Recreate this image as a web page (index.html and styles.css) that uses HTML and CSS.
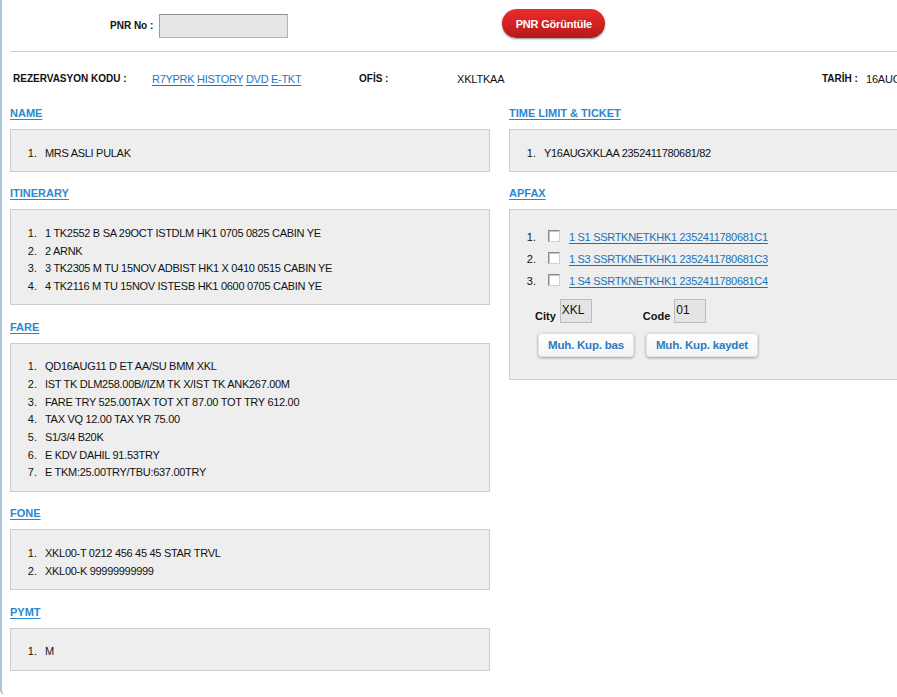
FILE: index.html
```html
<!DOCTYPE html>
<html lang="tr">
<head>
<meta charset="utf-8">
<title>PNR Görüntüle</title>
<link rel="stylesheet" href="styles.css">
</head>
<body>
<div class="page">
  <div class="search">
    <label class="search-label" for="pnr">PNR No :</label>
    <input class="pnr-input" id="pnr" type="text">
    <button class="btn-red" type="button">PNR Görüntüle</button>
  </div>
  <hr class="rule">
  <div class="info">
    <b class="info-label">REZERVASYON KODU :</b>
    <span class="info-links"><a href="#">R7YPRK</a> <a href="#">HISTORY</a> <a href="#">DVD</a> <a href="#">E-TKT</a></span>
    <b class="info-label">OFİS :</b>
    <span class="info-value">XKLTKAA</span>
    <b class="info-label">TARİH :</b>
    <span class="info-value">16AUG11</span>
  </div>
  <div class="columns">
    <div class="col">
      <section class="sec">
        <h2 class="sec-title"><a href="#">NAME</a></h2>
        <div class="box">
          <ol class="items">
            <li>MRS ASLI PULAK</li>
          </ol>
        </div>
      </section>
      <section class="sec">
        <h2 class="sec-title"><a href="#">ITINERARY</a></h2>
        <div class="box">
          <ol class="items">
            <li>1 TK2552 B SA 29OCT ISTDLM HK1 0705 0825 CABIN YE</li>
            <li>2 ARNK</li>
            <li>3 TK2305 M TU 15NOV ADBIST HK1 X 0410 0515 CABIN YE</li>
            <li>4 TK2116 M TU 15NOV ISTESB HK1 0600 0705 CABIN YE</li>
          </ol>
        </div>
      </section>
      <section class="sec">
        <h2 class="sec-title"><a href="#">FARE</a></h2>
        <div class="box">
          <ol class="items">
            <li>QD16AUG11 D ET AA/SU BMM XKL</li>
            <li>IST TK DLM258.00B//IZM TK X/IST TK ANK267.00M</li>
            <li>FARE TRY 525.00TAX TOT XT 87.00 TOT TRY 612.00</li>
            <li>TAX VQ 12.00 TAX YR 75.00</li>
            <li>S1/3/4 B20K</li>
            <li>E KDV DAHIL 91.53TRY</li>
            <li>E TKM:25.00TRY/TBU:637.00TRY</li>
          </ol>
        </div>
      </section>
      <section class="sec">
        <h2 class="sec-title"><a href="#">FONE</a></h2>
        <div class="box">
          <ol class="items">
            <li>XKL00-T 0212 456 45 45 STAR TRVL</li>
            <li>XKL00-K 99999999999</li>
          </ol>
        </div>
      </section>
      <section class="sec">
        <h2 class="sec-title"><a href="#">PYMT</a></h2>
        <div class="box">
          <ol class="items">
            <li>M</li>
          </ol>
        </div>
      </section>
    </div>
    <div class="col">
      <section class="sec">
        <h2 class="sec-title"><a href="#">TIME LIMIT &amp; TICKET</a></h2>
        <div class="box">
          <ol class="items">
            <li>Y16AUGXKLAA 2352411780681/82</li>
          </ol>
        </div>
      </section>
      <section class="sec">
        <h2 class="sec-title"><a href="#">APFAX</a></h2>
        <div class="box box-apfax">
          <ol class="items apfax-items">
            <li><input class="chk" type="checkbox"><a href="#">1 S1 SSRTKNETKHK1 2352411780681C1</a></li>
            <li><input class="chk" type="checkbox"><a href="#">1 S3 SSRTKNETKHK1 2352411780681C3</a></li>
            <li><input class="chk" type="checkbox"><a href="#">1 S4 SSRTKNETKHK1 2352411780681C4</a></li>
          </ol>
          <div class="fields">
            <label class="field-label">City</label>
            <input class="field-input" type="text" value="XKL" readonly>
            <label class="field-label field-label-code">Code</label>
            <input class="field-input" type="text" value="01" readonly>
          </div>
          <div class="actions">
            <button class="btn-white" type="button">Muh. Kup. bas</button>
            <button class="btn-white" type="button">Muh. Kup. kaydet</button>
          </div>
        </div>
      </section>
    </div>
  </div>
</div>
</body>
</html>
```

FILE: styles.css
```css
html, body {
  margin: 0;
  padding: 0;
  overflow: hidden;
  background: #ffffff;
}

body {
  font-family: "Liberation Sans", Arial, sans-serif;
  color: #111111;
}

.page {
  width: 1000px;
  height: 695px;
  box-sizing: border-box;
  padding-left: 8px;
  border-left: 2px solid #a9c7d9;
  border-bottom-left-radius: 5px;
}

/* search row */
.search {
  display: flex;
  align-items: flex-start;
  height: 29px;
  padding: 9px 0 0 100px;
}

.search-label {
  margin-top: 11px;
  margin-right: 6px;
  font-size: 10px;
  font-weight: bold;
  line-height: 12px;
  color: #111111;
}

.pnr-input {
  width: 129px;
  height: 24px;
  margin: 5px 0 0;
  padding: 0 3px;
  box-sizing: border-box;
  border: 1px solid #b4b4b4;
  border-top-color: #8e8e8e;
  border-left-color: #9c9c9c;
  background: #e6e5e5;
  font: 12px "Liberation Sans", Arial, sans-serif;
}

.btn-red {
  width: 103px;
  height: 29px;
  margin-left: 214px;
  padding: 0;
  border: 0;
  border-radius: 15px;
  background: linear-gradient(#ea2d2b 0%, #d42222 50%, #b01b1c 100%);
  box-shadow: 0 1px 2px rgba(0, 0, 0, 0.45);
  color: #ffffff;
  font: bold 11px "Liberation Sans", Arial, sans-serif;
  letter-spacing: -0.2px;
}

.rule {
  height: 0;
  margin: 13px 0 0;
  border: 0;
  border-top: 1px solid #cccccc;
}

/* info row */
.info {
  display: grid;
  grid-template-columns: 139px 207px 98px 365px 44px auto;
  align-items: center;
  margin-top: 20px;
  padding-left: 3px;
  line-height: 14px;
  white-space: nowrap;
}

.info-label {
  font-size: 10px;
  font-weight: bold;
  color: #111111;
}

.info-value {
  font-size: 11px;
  letter-spacing: -0.2px;
}

.info-links {
  font-size: 11px;
  letter-spacing: -0.3px;
}

.info-links a {
  color: #1f78bf;
  text-decoration: underline;
  text-underline-offset: 2px;
}

/* columns */
.columns {
  display: flex;
  gap: 19px;
  margin-top: 20px;
}

.col {
  width: 480px;
  flex: none;
}

.sec {
  margin-bottom: 14.5px;
}

.sec-title {
  margin: 0 0 9px;
  font-size: 11px;
  font-weight: bold;
  line-height: 14px;
}

.sec-title a {
  color: #2a88d0;
  text-decoration: underline;
  text-underline-offset: 2px;
}

.box {
  background: #eeeeee;
  border: 1px solid #cccccc;
  padding: 14.5px 0 8.8px;
}

.items {
  margin: 0;
  padding: 0;
  list-style: none;
  counter-reset: n;
}

.items li {
  counter-increment: n;
  font-size: 11px;
  line-height: 17.67px;
  letter-spacing: -0.3px;
  color: #111111;
  white-space: nowrap;
}

.items li::before {
  content: counter(n) ".";
  display: inline-block;
  width: 26px;
  margin-right: 8px;
  text-align: right;
  letter-spacing: 0;
}

/* apfax */
.box-apfax {
  padding: 16px 0 22px;
}

.apfax-items li {
  display: flex;
  align-items: center;
  height: 22px;
}

.apfax-items li::before {
  margin-right: 12px;
}

.chk {
  appearance: none;
  -webkit-appearance: none;
  width: 12px;
  height: 12px;
  margin: 0 9px 2px 0;
  box-sizing: border-box;
  border: 1px solid #8a8a8a;
  border-right-color: #d0d0d0;
  border-bottom-color: #d0d0d0;
  background: #ffffff;
  box-shadow: inset 1px 1px 0 #c4c4c4;
}

.apfax-items a {
  color: #1b72b8;
  text-decoration: underline;
  text-underline-offset: 2px;
}

.fields {
  display: flex;
  align-items: flex-end;
  margin-top: 7px;
  padding-left: 25px;
}

.field-label {
  margin-right: 4px;
  font-size: 11px;
  font-weight: bold;
  line-height: 13px;
  color: #111111;
}

.field-label-code {
  margin-left: 51px;
}

.field-input {
  width: 32px;
  height: 24px;
  margin: 0;
  padding: 0 0 3px 1px;
  box-sizing: border-box;
  border: 1px solid #bdbdbd;
  background: #e5e4e4;
  color: #111111;
  font: 12px "Liberation Sans", Arial, sans-serif;
}

.actions {
  display: flex;
  gap: 12px;
  margin-top: 10px;
  padding-left: 28px;
}

.btn-white {
  height: 24px;
  padding: 0 9px;
  border: 1px solid #e2e2e2;
  border-radius: 4px;
  background: linear-gradient(#ffffff, #f4f4f4);
  box-shadow: 0 1px 3px rgba(0, 0, 0, 0.35);
  color: #2b7bc0;
  font: bold 11.5px "Liberation Sans", Arial, sans-serif;
  letter-spacing: -0.2px;
}
```
